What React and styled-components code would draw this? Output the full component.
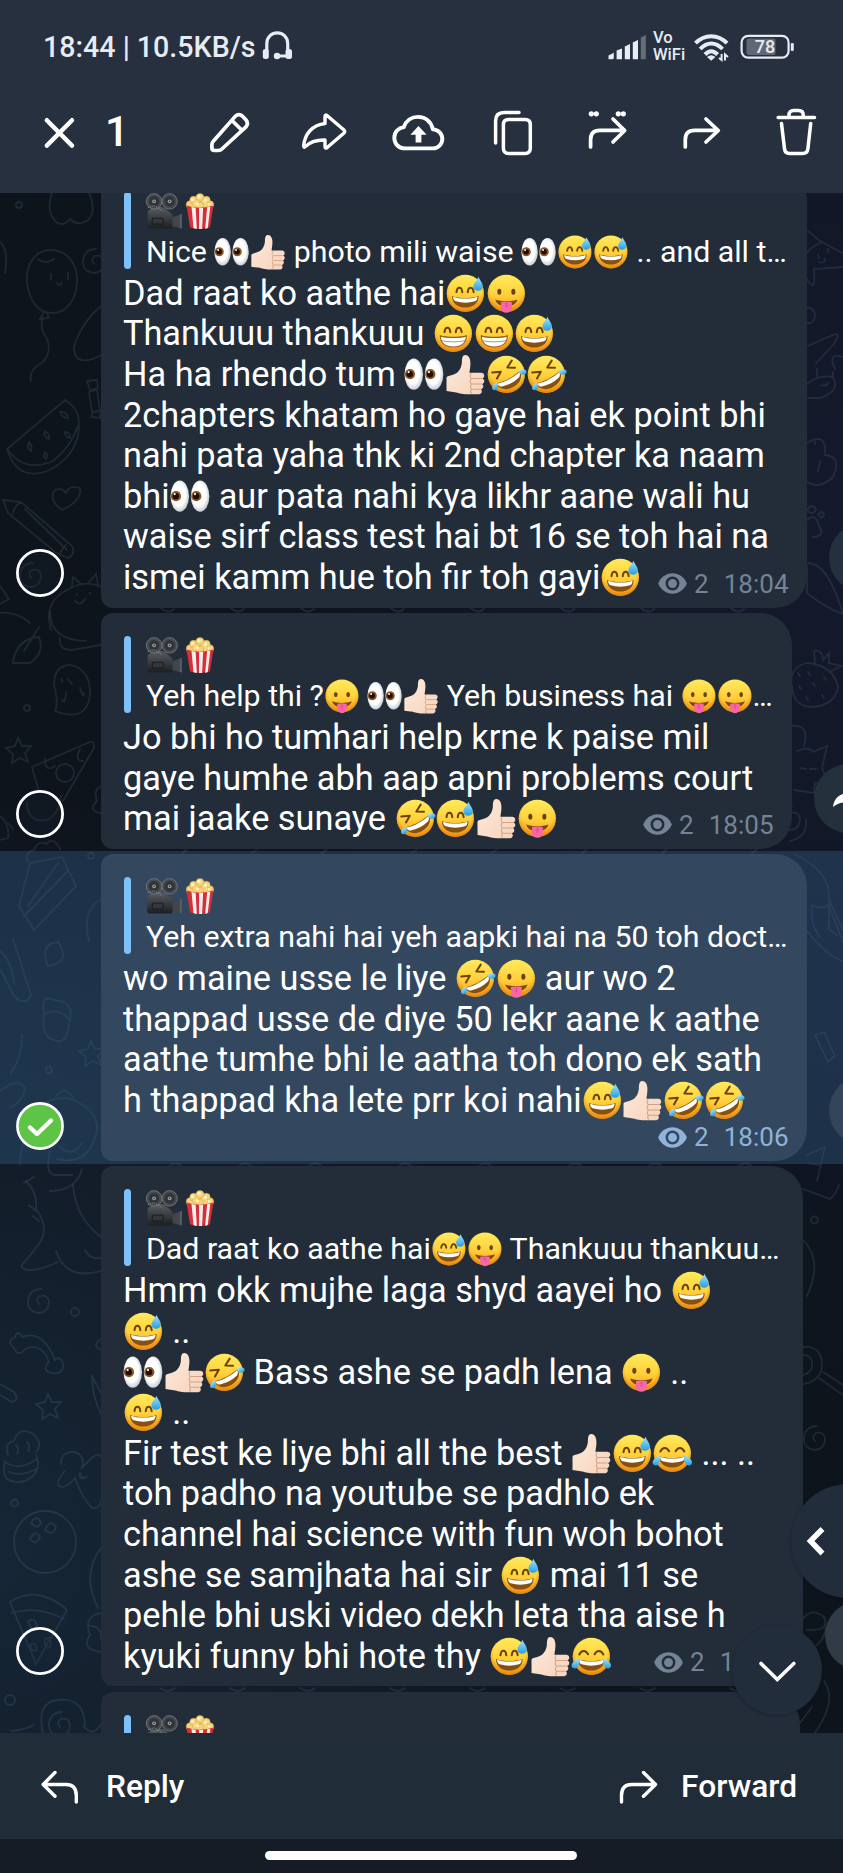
import React from "react";
import styled, { createGlobalStyle, css } from "styled-components";

const GlobalStyle = createGlobalStyle`
  * { box-sizing: border-box; }
  body { margin: 0; background: #0e151d; }
`;

const Screen = styled.div`
  width: 843px;
  height: 1873px;
  display: flex;
  flex-direction: column;
  overflow: hidden;
  font-family: Roboto, "Liberation Sans", sans-serif;
  color: #fff;
`;

const Header = styled.header`
  flex: none;
  height: 192.5px;
  background: #26303e;
`;

const StatusBar = styled.div`
  height: 102px;
  display: flex;
  align-items: flex-start;
  justify-content: space-between;
  padding: 30px 49px 0 43px;
  color: #e6ebf4;
`;

const StatusLeft = styled.div`
  display: flex;
  align-items: flex-start;
  gap: 6px;
  font-size: 28.6px;
  line-height: 34px;
  font-weight: 500;
  white-space: pre;
`;

const StatusRight = styled.div`
  display: flex;
  align-items: flex-start;
`;

const NetworkLabel = styled.div`
  width: 33px;
  margin: 0 7px;
  font-size: 16.6px;
  font-weight: 500;
  line-height: 16.8px;
`;

const Toolbar = styled.div`
  height: 60px;
  display: flex;
  align-items: center;
`;

const CloseButton = styled.div`
  width: 105px;
  height: 60px;
  padding-left: 30px;
`;

const Count = styled.div`
  flex: 1;
  font-size: 42px;
  font-weight: 500;
  line-height: 60px;
`;

const ToolButton = styled.div`
  flex: none;
  width: 94.4px;
  display: flex;
  justify-content: center;
`;

const Chat = styled.main`
  position: relative;
  flex: none;
  height: 1540px;
  overflow: hidden;
  background:
    radial-gradient(ellipse 560px 900px at 100% 22%, #141a2c 0%, rgba(20, 26, 44, 0) 100%),
    radial-gradient(ellipse 620px 760px at 0% 88%, #162636 0%, rgba(22, 38, 54, 0) 100%),
    #0e141c;
`;

const Wallpaper = styled.svg`
  position: absolute;
  left: 0;
  top: 0;
  display: block;
`;

const Messages = styled.div`
  position: relative;
  margin-top: -26.2px;
`;

const Row = styled.div`
  display: flex;
  align-items: flex-end;
  height: ${(p) => p.$height}px;
  padding: 2.6px 0;
  overflow: hidden;
  ${(p) => p.$selected && css`background: rgba(51, 92, 136, 0.4);`}
`;

const Selector = styled.div`
  flex: none;
  width: 101px;
  padding: 0 0 11px 16.3px;
  svg { display: block; }
`;

const Bubble = styled.article`
  flex: none;
  width: ${(p) => p.$width}px;
  height: 100%;
  display: flex;
  flex-direction: column;
  padding: 23px 18.5px 0 23px;
  border-radius: 12px 32px 32px 12px;
  background: ${(p) => (p.$selected ? "#33485f" : "#222d39")};
`;

const Quote = styled.div`
  flex: none;
  display: flex;
  height: 76.8px;
  margin-bottom: 4.2px;
  font-size: 30.3px;
  line-height: 35.5px;
  white-space: pre;
`;

const QuoteBar = styled.div`
  width: 7.3px;
  margin-right: 14.7px;
  border-radius: 3.5px;
  background: #7dc1fb;
`;

const QuoteName = styled.div`
  height: 35.5px;
  padding-top: 0.8px;
  margin-bottom: 6.2px;
`;

const QuoteText = styled.div`
  height: 35.5px;
`;

const Line = styled.div`
  height: 40.6px;
  margin-left: -1px;
  font-size: 34.3px;
  line-height: 40.6px;
  white-space: pre;
`;

const Meta = styled.div`
  display: flex;
  align-items: center;
  align-self: flex-end;
  flex: none;
  width: 130.5px;
  height: 30px;
  margin-top: auto;
  margin-bottom: 9.3px;
  font-size: 26px;
  line-height: 30px;
  color: ${(p) => (p.$selected ? "#8fb3da" : "#748496")};
  svg { margin-right: 7px; }
`;

const Time = styled.span`
  margin-left: auto;
`;

const Share = styled.div`
  flex: none;
  width: 69px;
  height: 69px;
  margin: 0 0 16px 22px;
  border-radius: 50%;
  background: ${(p) => p.$color};
  svg { display: block; }
`;

const FloatingButton = styled.div`
  position: absolute;
  left: ${(p) => p.$left}px;
  top: ${(p) => p.$top}px;
  width: ${(p) => p.$size}px;
  height: ${(p) => p.$size}px;
  border-radius: 50%;
  background: #222d3b;
  box-shadow: 0 1px 3px rgba(8, 14, 22, 0.3);
  svg { display: block; }
`;

const ActionBar = styled.footer`
  flex: none;
  height: 106.3px;
  display: flex;
  justify-content: space-between;
  align-items: flex-start;
  padding: 32px 46px 0 40px;
  background: #212c39;
  font-size: 31.7px;
  font-weight: 500;
  line-height: 44px;
`;

const Action = styled.div`
  display: flex;
  gap: ${(p) => p.$gap}px;
  svg { margin-top: 4px; }
`;

const NavBar = styled.div`
  flex: 1;
  display: flex;
  justify-content: center;
  align-items: flex-start;
  padding-top: 12.6px;
  background: #151c26;
`;

const HomePill = styled.div`
  width: 312px;
  height: 9px;
  margin-right: 1px;
  border-radius: 5px;
  background: #fff;
`;

const EmojiSvg = styled.svg`
  display: inline-block;
  width: 1.186em;
  height: 1.186em;
  vertical-align: -0.251em;
  overflow: visible;
`;

const stroke = {
  fill: "none",
  stroke: "currentColor",
  strokeWidth: 3.7,
  strokeLinecap: "round",
  strokeLinejoin: "round",
};

const Gradients = styled.svg`
  position: absolute;
  width: 0;
  height: 0;
`;

const Defs = () => (
  <Gradients>
    <defs>
      <linearGradient id="face" x1="0" y1="0" x2="0" y2="1">
        <stop offset="0" stopColor="#ffea5c" />
        <stop offset=".55" stopColor="#ffd03a" />
        <stop offset="1" stopColor="#f5961a" />
      </linearGradient>
      <radialGradient id="rim" cx=".5" cy=".42" r=".58">
        <stop offset=".74" stopColor="#e98c10" stopOpacity="0" />
        <stop offset="1" stopColor="#dc7d0c" stopOpacity=".75" />
      </radialGradient>
      <linearGradient id="tear" x1="0" y1="0" x2="0" y2="1">
        <stop offset="0" stopColor="#a5e3fb" />
        <stop offset="1" stopColor="#279fe0" />
      </linearGradient>
      <radialGradient id="eyeball" cx=".45" cy=".45" r=".55">
        <stop offset=".65" stopColor="#fff" />
        <stop offset="1" stopColor="#c9cdd4" />
      </radialGradient>
      <linearGradient id="hand" x1="0" y1="0" x2="1" y2="1">
        <stop offset="0" stopColor="#ffeadb" />
        <stop offset="1" stopColor="#f5d3bd" />
      </linearGradient>
      <linearGradient id="metal" x1="0" y1="0" x2="0" y2="1">
        <stop offset="0" stopColor="#5a5f65" />
        <stop offset="1" stopColor="#1c1e21" />
      </linearGradient>
    </defs>
  </Gradients>
);

const Face = () => (
  <>
    <circle cx="20" cy="20" r="18.3" fill="url(#face)" />
    <circle cx="20" cy="20" r="18.3" fill="url(#rim)" />
  </>
);
const browned = { fill: "none", stroke: "#6b420c", strokeWidth: 2, strokeLinecap: "round", strokeLinejoin: "round" };
const ArchEyes = () => <path {...browned} d="M11.3 18.8C12 13.2 16.4 13.2 17 18.8M22.4 18.8C23 13.2 27.4 13.2 28.2 18.8" />;
const Grin = () => (
  <>
    <path d="M7 22.5C13 25.2 27 25.2 33 22.5C33.5 29.5 27.5 34 20 34S6.5 29.5 7 22.5Z" fill="#86500f" />
    <path d="M8 23.3C14 25.8 26 25.8 32 23.3C32 25.8 31 27.2 29.5 27.8C23 29.6 17 29.6 10.5 27.8C9 27.2 8 25.8 8 23.3Z" fill="#fff" />
  </>
);

const EMOJI = {
  "😅": (
    <>
      <Face />
      <ArchEyes />
      <Grin />
      <path d="M32.8 3.6C34.6 7.4 37.4 10 37.2 13.4A4.7 4.7 0 0 1 27.9 13.4C27.8 10 31.6 7.4 32.8 3.6Z" fill="url(#tear)" />
    </>
  ),
  "😁": (
    <>
      <Face />
      <ArchEyes />
      <path d="M7.2 22.5C13 24.5 27 24.5 32.8 22.5C33 29.5 27.5 33.4 20 33.4S7 29.5 7.2 22.5Z" fill="#fff" stroke="#94601a" strokeWidth="1.1" />
      <path d="M8.2 27.2C15 28.8 25 28.8 31.8 27.2" stroke="#a98a66" strokeWidth=".9" fill="none" />
    </>
  ),
  "😛": (
    <>
      <Face />
      <ellipse cx="13.1" cy="18.4" rx="2" ry="2.9" fill="#6b420c" />
      <ellipse cx="26.9" cy="18.4" rx="2" ry="2.9" fill="#6b420c" />
      <path d="M9 26C15 28.3 25 28.3 31 26C29.5 30.5 26 32.5 20 32.5S10.5 30.5 9 26Z" fill="#7d460c" />
      <path d="M14.7 28.6Q20 27.4 25.4 28.6V33.8A5.35 5.35 0 0 1 14.7 33.8Z" fill="#f866a6" />
      <path d="M20 29V34" stroke="#dc3f83" strokeWidth="1" />
    </>
  ),
  "🤣": (
    <>
      <Face />
      <g transform="rotate(-28 20 20)">
        <path {...browned} d="M8.6 12L16.4 15.2L10 19.2M31 10.6L24 14.5L30.6 18.2" />
        <path d="M6.5 23C14 25.6 26 25.6 33.5 23C33 30.2 27.5 34.2 20 34.2S7 30.2 6.5 23Z" fill="#86500f" />
        <path d="M7.5 23.8C14 26.2 26 26.2 32.5 23.8C32 26.6 31 28 29.4 28.6C23 30.4 17 30.4 10.6 28.6C9 28 8 26.6 7.5 23.8Z" fill="#fff" />
        <path d="M7.8 22.5C9 26 6 29.5 2.6 28.4C-.5 27 1 23 7.8 22.5ZM32.2 22.5C31 26 34 29.5 37.4 28.4C40.5 27 39 23 32.2 22.5Z" fill="url(#tear)" />
      </g>
    </>
  ),
  "😂": (
    <>
      <Face />
      <path {...browned} d="M8.2 18.2C10.5 13.6 14.6 13.6 16.8 18M23.2 18C25.4 13.6 29.5 13.6 31.8 18.2" />
      <Grin />
      <path d="M8 22C9.5 26 7.5 32 3.6 32C-.9 31.7-1 25.5 8 22ZM32 22C30.5 26 32.5 32 36.4 32C40.9 31.7 41 25.5 32 22Z" fill="url(#tear)" />
    </>
  ),
  "👀": (
    <>
      {[9.6, 29.6].map((x) => (
        <g key={x}>
          <ellipse cx={x} cy="19.8" rx="9.1" ry="15.3" fill="url(#eyeball)" />
          <circle cx={x - 3.7} cy="19.8" r="5" fill="#8a561f" />
          <circle cx={x - 3.9} cy="19.8" r="3.1" fill="#1f0d03" />
          <circle cx={x - 5} cy="17.8" r="1.1" fill="#fff" />
        </g>
      ))}
    </>
  ),
  "👍🏻": (
    <>
      <path
        d="M1.5 23.5C1.5 21.5 6 21.5 10 19.5C14.5 17 16.2 12.5 16.6 8.5C16.6 4 17.2 1 20 1C23.5 1 25 5 25 9C25 12.5 24.3 16 24 18.5H35.6C39.2 18.5 39.6 23.2 36.7 24C39.4 24.7 39.3 29 36.3 29.5C38.4 30.4 38.2 34.2 35.2 34.6C37 35.7 36.4 39.5 33.5 39.5H20C14.5 39.5 12.5 37.6 8 37.4L1.5 36.4Z"
        fill="url(#hand)"
      />
      <path d="M26 24.1H36.5M26 29.5H36M26 34.6H35M25.8 19C24.2 21 24.4 23 26 24.2C24.4 26 24.4 28 26 29.5C24.6 31.4 24.8 33.2 26 34.6C25 36 25 37.6 26.2 39" stroke="#d6a184" strokeWidth="1" fill="none" />
    </>
  ),
  "🎥": (
    <>
      <path d="M28 27.5L40 23V39.6L28 36.5Z" fill="#41464c" />
      <path d="M37.6 24L40 23V39.6L37.6 39Z" fill="#565c63" />
      <path d="M2 20Q12 12 21 17L29.5 24V37Q29.5 39.5 27 39.5H4Q1.3 39.5 1.3 37Z" fill="url(#metal)" />
      <rect x="7" y="28" width="12" height="6.5" rx=".6" fill="#33373b" stroke="#111" strokeWidth=".8" />
      {[9, 26.3].map((x) => (
        <g key={x}>
          <circle cx={x} cy="9.3" r="8.6" fill="#45494d" stroke="#7a7f84" strokeWidth=".9" />
          <circle cx={x} cy="9.3" r="5.6" fill="#303337" />
          <circle cx={x} cy="9.3" r="2.1" fill="#a0a5aa" />
          <circle cx={x} cy="9.3" r=".9" fill="#222" />
        </g>
      ))}
      <path d="M2 16.5L9 14L18 20" stroke="#83888c" strokeWidth="1" strokeDasharray="1.5 1" fill="none" />
    </>
  ),
  "🍿": (
    <>
      <g fill="#f5d47c" stroke="#d9a649" strokeWidth=".6">
        <circle cx="9" cy="13" r="4.3" /><circle cx="31" cy="13" r="4.3" />
        <circle cx="13" cy="8" r="4.4" /><circle cx="27" cy="8" r="4.4" />
        <circle cx="20" cy="5" r="4.4" /><circle cx="16" cy="12" r="4.6" />
        <circle cx="24.5" cy="12" r="4.6" /><circle cx="20" cy="14" r="4" />
      </g>
      <g fill="#fff1bd"><circle cx="19" cy="4" r="2" /><circle cx="12" cy="7.5" r="1.8" /><circle cx="26" cy="8" r="2" /><circle cx="17" cy="12" r="1.8" /><circle cx="30" cy="12.5" r="1.5" /></g>
      <path d="M5 14Q20 19 35 14L31 38.5Q20 41.5 9 38.5Z" fill="#d52f3c" />
      <path d="M10.6 15.5L15.2 16.3L16.5 40L12.8 39.3ZM19 16.6H23.5L22.4 40.2H19ZM28 16L31.5 15.2L28.6 39.2L25.8 39.8Z" fill="#fbeeea" />
    </>
  ),
};

const EMOJI_RE = /(👍🏻|😅|😁|😛|🤣|😂|👀|🎥|🍿)/u;

const Rich = ({ text }) =>
  text.split(EMOJI_RE).map((part, i) =>
    EMOJI[part] ? (
      <EmojiSvg key={i} viewBox="0 0 40 40" role="img" aria-label={part}>
        {EMOJI[part]}
      </EmojiSvg>
    ) : (
      part
    )
  );

const Ring = () => (
  <svg width="48" height="48">
    <circle cx="24" cy="24" r="22.6" fill="rgba(24,40,58,.2)" stroke="#fff" strokeWidth="2.8" />
  </svg>
);
const Checked = () => (
  <svg width="48" height="48">
    <circle cx="24" cy="24" r="22.6" fill="#5dc445" stroke="#fff" strokeWidth="2.6" />
    <path d="M14 25.5L21 32L35 18.5" fill="none" stroke="#fff" strokeWidth="4.4" strokeLinecap="round" strokeLinejoin="round" />
  </svg>
);
const Eye = ({ hole }) => (
  <svg width="29" height="21" viewBox="0 0 29 21">
    <path d="M14.5 .3C8 .3 2.5 4.5 .2 10.5C2.5 16.5 8 20.7 14.5 20.7S26.5 16.5 28.8 10.5C26.5 4.5 21 .3 14.5 .3Z" fill="currentColor" />
    <circle cx="14.5" cy="10.5" r="5.7" fill="none" stroke={hole} strokeWidth="2.5" />
  </svg>
);

const MESSAGES = [
  {
    height: 444.4, width: 706, time: "18:04", share: "#25303f",
    quote: "Nice 👀👍🏻 photo mili waise 👀😅😅 .. and all t…",
    lines: [
      "Dad raat ko aathe hai😅😛",
      "Thankuuu thankuuu 😁😁😅",
      "Ha ha rhendo tum 👀👍🏻🤣🤣",
      "2chapters khatam ho gaye hai ek point bhi",
      "nahi pata yaha thk ki 2nd chapter ka naam",
      "bhi👀 aur pata nahi kya likhr aane wali hu",
      "waise sirf class test hai bt 16 se toh hai na",
      "ismei kamm hue toh fir toh gayi😅",
    ],
  },
  {
    height: 240.7, width: 691, time: "18:05", share: "#25303d",
    quote: "Yeh help thi ?😛 👀👍🏻 Yeh business hai 😛😛…",
    lines: ["Jo bhi ho tumhari help krne k paise mil", "gaye humhe abh aap apni problems court", "mai jaake sunaye 🤣😅👍🏻😛"],
  },
  {
    height: 312.5, width: 706, time: "18:06", share: "#34445b", selected: true,
    quote: "Yeh extra nahi hai yeh aapki hai na 50 toh doct…",
    lines: ["wo maine usse le liye 🤣😛 aur wo 2", "thappad usse de diye 50 lekr aane k aathe", "aathe tumhe bhi le aatha toh dono ek sath", "h thappad kha lete prr koi nahi😅👍🏻🤣🤣"],
  },
  {
    height: 525.2, width: 702, time: "18:07", share: "#303b46",
    quote: "Dad raat ko aathe hai😅😛 Thankuuu thankuu…",
    lines: [
      "Hmm okk mujhe laga shyd aayei ho 😅",
      "😅 ..",
      "👀👍🏻🤣 Bass ashe se padh lena 😛 ..",
      "😅 ..",
      "Fir test ke liye bhi all the best 👍🏻😅😂 ... ..",
      "toh padho na youtube se padhlo ek",
      "channel hai science with fun woh bohot",
      "ashe se samjhata hai sir 😅 mai 11 se",
      "pehle bhi uski video dekh leta tha aise h",
      "kyuki funny bhi hote thy 😅👍🏻😂",
    ],
  },
];

const LineStack = styled.div`
  flex: none;
`;

const MetaSlot = styled.div`
  flex: none;
  display: flex;
  flex-direction: column;
  height: 70px;
  margin-top: ${(p) => (p.$ownLine ? -28.9 : -59.8)}px;
`;

const Message = ({ m }) => (
  <Row $height={m.height} $selected={m.selected}>
    <Selector>{m.selected ? <Checked /> : <Ring />}</Selector>
    <Bubble $width={m.width} $selected={m.selected}>
      <Quote>
        <QuoteBar />
        <div>
          <QuoteName><Rich text="🎥🍿" /></QuoteName>
          <QuoteText><Rich text={m.quote} /></QuoteText>
        </div>
      </Quote>
      <LineStack>
        {m.lines.map((l, i) => <Line key={i}><Rich text={l} /></Line>)}
      </LineStack>
      <MetaSlot $ownLine={m.selected}>
        <Meta $selected={m.selected}>
          <Eye hole={m.selected ? "#33485f" : "#222d39"} />
          <span>2</span>
          <Time>{m.time}</Time>
        </Meta>
      </MetaSlot>
    </Bubble>
    <Share $color={m.share}>
      <svg width="69" height="69">
        <path d="M19 43C20 33 27 29 36 29V21L51 34L36 47V38C29 38 24 39 19 43Z" fill="#fff" />
      </svg>
    </Share>
  </Row>
);

const SWIRL = "q-4-5 1-8q8-2 9 6q0 10-10 11q-12-1-11-13q2-11 13-11";
const STAR = "l4 8 9 0-6 7 3 9-8-4-8 5 1-9-7-6 9-2z";
const DOODLES = [
  "M52 192q-6 18 3 28q7 7 15-2q8 8 18 1q9-9 1-27", "M16 204a3 3 0 1 0 6 0a3 3 0 1 0-6 0",
  "M27 281C26 262 36 249 51 249S78 262 77 281S66 312 52 312S29 300 27 281M38 258q8 6 16 0M51 273v6M68 272v6M57 282q3 4 5 0M44 311l-4 7 9-1-2-5M43 317q-4 9 3 19q7 13-3 25q-15 8-12 19",
  "M0 241q9 8 5 31M94 263" + SWIRL,
  "M101 305q-20 17-27 41q0 16 15 13q8-2 12-5",
  "M87 380l10-1 1 8-8 2zM89 391l8-2 3 20-8 2zM93 411l7-1 0 7-9-1z",
  "M65 399L7 448Q17 482 50 469Q84 450 78 414Q74 404 65 399M8 449Q24 472 53 460Q70 447 78 425M60 411q7-1 8 6q-6 0-8-6M45 430q5 3 4 8q-6-2-4-8M65 431q6 1 5 6q-6-1-5-6M29 441q4 4 2 9q-5-3-2-9M45 451q4 3 1 7q-4-3-1-7",
  "M62 509Q49 500 54 490Q61 485 66 492Q69 484 80 487Q82 500 62 509",
  "M3 499l18 2L72 545q4 8-4 12L55 551L8 512zM21 501q-7 4-8 12M25 508l42 41M66 544q-6 6-6 10",
  "M31 577" + SWIRL, "M101 586q-16-8-34 3q-24 12-16 40M72 585l1-9 8 7M89 581l7-8 2 11M75 600q5 6 10-2M77 593v1M90 592v1M0 585l9 13-9 5M0 612q16-2 30 10",
  "M50 611q0 28 36 29M60 637q-2 12 12 12l29-5M13 662q3-24 26-26q6 16-9 26zM24 650l15-24M24 707a3 3 0 1 0 6 0a3 3 0 1 0-6 0",
  "M55 710q4-8-1-26q0-20 17-20q20 5 19 30q-3 28-35 16M66 691q-1 14-4 8M80 687q4 12 4 5M68 678l4 5M62 678v3",
  "M18 737" + STAR, "M32 766L90 741q5-1 4 6L63 800M32 766l7 25M45 758q0 14 10 7M56 772a9 9 0 1 0 18 0a9 9 0 1 0-18 0M80 748q-6 12 3 12M27 802q0 20 20 17q12-6 14-24M101 785q-8 4-4 15q-10 10 4 12",
  "M0 815q10 8 8 22l-8 2M8 822l5 6",
  "M28 861q-4-10 6-12q4-10 12-6q8-8 14 5M30 862L19 905L34 929L76 885L62 856zM28 905L58 862M24 915L68 870M88 855a3 3 0 1 0 6 0a3 3 0 1 0-6 0M101 898q-20 12-12 42",
  "M48 965q-9-22 10-24q14 20-10 24M0 950q12 10 14 32M13 938l18 56q-6 12-17 1L0 968M44 1014q-4-22 10-15q22 1 15 24q-2 22-15 16q-13-3-10-25M44 1014q12-9 25 4M22 1034q1 20-11 38",
  "M91 1040" + STAR, "M46 1069a3 3 0 1 0 6 0a3 3 0 1 0-6 0",
  "M0 1090q18-14 25-3q0 10-14 20M56 1094l9-5 8 7M30 1120q14-27 41-22q36 14 22 44q-10 22-36 16M60 1146q12 11 22-4M20 1164q0-24 14-44M24 1182l10-6M50 1150q-6 24 6 24l16 0M50 1190q26 0 32-22",
  "M26 1180q12 12 10 28q14 18 3 35q-9 12-18 22q6 10 37-4M73 1184q2 32 28 52M56 1250q10 30 45 20M85 1249q5 10 16 8M39 1220l-6-5M36 1210l-7-6",
  "M39 1303" + SWIRL, "M71 1311a4 4 0 1 0 8 0a4 4 0 1 0-8 0",
  "M15 1336q-9 4-1 11q4 10 11 1q17-7 24 13q-8 8 2 11q14 2 12-10q-4-8-8-3q-12-31-33-23q-4-8-7 0M101 1338q-10 6 0 11M0 1383l14 8q6 8-2 10L0 1394M48 1393" + STAR + "M92 1375l9 17M92 1375q0 20 9 38",
  "M5 1460q-6 25 20 20q18-8 11-26M8 1454q-4-12 6-14q4-14 18-8q12 10 4 19M6 1462q14 8 31-4M9 1471q13 5 27-3M16 1444q4 4 1 9M27 1441q4 4 1 9",
  "M61 1463a11 11 0 1 1 20 5q17-20 20-12M65 1470q-8 9-7 14q6 6 17-7q7 20 17 30q9 0 9-7M80 1472a3 3 0 1 0 6 4q-6 2-6-4M11 1502a3 3 0 1 0 7 0a3 3 0 1 0-7 0",
  "M14 1541a31 31 0 1 0 62 0a31 31 0 1 0-62 0M31 1522q6-10 10 0q-3 7-10 0M45 1529q5-12 11-3q-3 10-11 3M30 1538q5-10 10-2q-4 9-10 2M101 1547q-20 26-3 60",
  "M10 1601q28-18 57 8L36 1663L10 1601M12 1612q25-8 52 6M28 1620q8-4 9 6q-6 5-9-6M45 1638q8-4 5 8q-6 3-5-8M30 1644q6-4 7 4q-5 5-7-4M101 1612q-18 3-11 22q-10 14 11 17M90 1625q12 0 11 13",
  "M5 1699a5 5 0 1 0 10 0a5 5 0 1 0-10 0M43 1733q-7-31 14-34q28-3 28 26M60 1726" + SWIRL + "M12 1730q15-2 22-6M83 1725q10 12 18-2",
  "M808 230l12 10 22 12M820 242q-14 6-16 17l2 17q10 20 8-8l29-2M818 254l1 3M828 248v3M819 261q6 2 6-3M806 306q12 2 8 13q-4 6-9 1",
  "M808 345l27-12q6 0-2 11l-17 18M807 383q12-10 26-7q8 14-13 21h-12M817 376v-8M833 376l0-5M821 384q5 2 7-2M835 368q-8-17 8-12",
  "M807 442q20-12 18 12q17 1 8 22q-14 13-26 5M820 460l-2 10M815 440v3M807 509q6-8 9 0q-4 6-9 0M818 514q4-6 6 0q-2 5-6 0M807 519q9-8 12 6q7 10-6 11M808 562q20 0 35 51M807 565v27q20 16 36 21",
  "M792 685q-4-18 15-23q26 2 31 24q-3 18-25 20q-20 0-21-21M815 662l-1-12q8-2 9 9l6-7 0 10 12 3-11 6M798 672l2 3M808 671l2 3M799 685l2 3M813 682l2 3M824 676l2 3M806 696l2 3M822 694l2 3",
  "M792 725q18-2 12 20M797 750q12-5 16 1l14-6-5 22 6 14-13 1-1 10-20-3M800 767l6 1M810 768h6M790 820" + SWIRL + "M806 818q2 18-16 22",
  "M794 853q37 17 35 46l14 30M812 904q10 6 17-1l0 25 8 6M812 904q-2 20 8 32M829 905l14 36M807 930q18 23 35 30M815 1034l9-3 11 24-7 6zM807 1154l18-8-8 34M808 1162l12 2M803 1188l27 10q6-5 9-14",
  "M811 1219a3.5 3.5 0 1 0 7 0a3.5 3.5 0 1 0-7 0M804 1240q19 20 3 55M803 1346q18-2 19 17q0 16-18 20M803 1354q10 0 9 11q-1 7-9 9M819 1377l24 17M823 1371l20 13M815 1440" + SWIRL,
  "M803 1618q8-12 21-2q7 14-17 13M824 1616q6 18-9 30M824 1680q14 20-10 53M800 1722l12-16",
];

const ICONS = {
  edit: <path d="M12.9 46V42.5Q12.9 40.6 14.3 39.2L36.2 14.4Q39.9 11 43.5 14.2L47.1 18Q49.9 21.6 46.7 25.2L22.9 47Q21.5 48.5 19.5 48.5H15.5Q12.9 48.5 12.9 46ZM33 18.5L42.9 28.3" />,
  share: <path d="M31 14.5Q31 12.3 33 13.5L50 28Q51.3 29.5 50 31L33.2 45.5Q31 47 31 44.6V38C22 37.8 16 39.8 11.4 44.6Q9.5 46.3 9.7 43.4C11 31.5 18.5 22.8 31 21.6Z" strokeWidth="3.4" />,
  cloud: <><path strokeWidth="3.9" d="M17 46.4C10 46.4 6.3 41.3 6.3 35.8C6.3 30 10.5 25.8 15.8 25.1C18 18.7 23.5 14.9 30 14.9C38 14.9 43.3 20 44.9 27.4C50.5 27.6 54.3 31.8 54.3 36.9C54.3 42.2 50 46.4 45 46.4Z" /><path d="M30.5 24L22.4 32.7H27.6V40.5H33.4V32.7H38.6Z" fill="#fff" stroke="none" /></>,
  copy: <path strokeWidth="3.5" d="M12.6 41V19Q12.6 10.6 21 10.6H36M25.5 17.6H42.2Q47.3 17.6 47.3 22.7V46.3Q47.3 51.4 42.2 51.4H25.5Q20.4 51.4 20.4 46.3V22.7Q20.4 17.6 25.5 17.6Z" />,
  forwardQuote: <><path d="M13.6 45V37.5Q13.6 28.3 22.8 28.3H46.5M36 17L47.7 28.5L36 40" /><g fill="#fff" stroke="none"><circle cx="14.3" cy="11.8" r="2.6" /><circle cx="19.3" cy="11.8" r="2.6" /><circle cx="41.3" cy="11.8" r="2.6" /><circle cx="46.3" cy="11.8" r="2.6" /></g></>,
  forward: <path d="M14.3 45V37.5Q14.3 28.3 23.5 28.3H46.8M35 17L47.3 28.5L35 40" />,
  trash: <path strokeWidth="3.5" d="M12.1 15.4H48.5M23 15V13.2Q23 8.6 27.6 8.6H32.6Q37.2 8.6 37.2 13.2V15M15.5 21.5L18.5 46.8Q19 51.5 23.6 51.5H36.7Q41.3 51.5 41.9 46.8L44.7 21.5" />,
};

export default function App() {
  return (
    <Screen>
      <GlobalStyle />
      <Defs />
      <Header>
        <StatusBar>
          <StatusLeft>
            18:44 | 10.5KB/s
            <svg width="31" height="30" viewBox="0 0 31 30" {...stroke} strokeWidth="3.2">
              <path d="M4.8 21V13.8C4.8 -.8 25.7 -.8 25.7 13.8V21M15 26H26" />
              <g fill="currentColor" stroke="none">
                <rect x=".8" y="19" width="6" height="10" rx="2.5" /><rect x="23.5" y="19" width="6.5" height="10" rx="2.5" /><circle cx="15" cy="26" r="3.2" />
              </g>
            </svg>
          </StatusLeft>
          <StatusRight>
            <svg width="38" height="30" viewBox="0 0 38 30" fill="currentColor">
              <path d="M.5 29.3V25.5L5.8 22.8V27.7Q5.8 29.3 4.2 29.3Z" />
              <path d="M8.6 20.5L14 18.5V29.3H8.6Z" /><path d="M16.8 16.5L22 14V29.3H16.8Z" /><path d="M24.8 12.5L30 10V29.3H24.8Z" />
              <path d="M32.8 7.5L37.8 5V29.3H32.8Z" opacity=".33" />
            </svg>
            <NetworkLabel>Vo<br />WiFi</NetworkLabel>
            <svg width="45" height="32" viewBox="0 0 45 32" fill="none" stroke="currentColor">
              <path d="M2.5 13.2C11.5 3.8 25 3.8 34 13.2M7.2 19C14.2 11.5 22.5 11.5 29.5 19M12 24.5Q18.2 18 24.6 24.5" strokeWidth="4" />
              <path d="M14 27Q18.2 23.6 22.4 27L18.2 30.8Z" fill="currentColor" stroke="none" />
              <path d="M28.6 24V30L26 28M32 30.5V24.5L35 27" strokeWidth="2" />
            </svg>
            <svg width="56" height="34" viewBox="0 0 56 34">
              <rect x="8.5" y="8.5" width="29" height="16.5" rx="2" fill="#606875" />
              <rect x="3.6" y="5.9" width="47" height="21.7" rx="6.5" fill="none" stroke="currentColor" strokeWidth="2.2" />
              <rect x="52.8" y="13" width="3" height="8" rx="1.2" fill="currentColor" />
              <text x="27" y="23.2" fontSize="18" fontWeight="500" fill="currentColor" textAnchor="middle">78</text>
            </svg>
          </StatusRight>
        </StatusBar>
        <Toolbar>
          <CloseButton>
            <svg width="60" height="60" {...stroke} strokeWidth="4.4"><path d="M16.8 18.2L42 43.6M42 18.2L16.8 43.6" /></svg>
          </CloseButton>
          <Count>1</Count>
          {Object.entries(ICONS).map(([name, icon]) => (
            <ToolButton key={name}><svg width="60" height="60" {...stroke}>{icon}</svg></ToolButton>
          ))}
        </Toolbar>
      </Header>
      <Chat>
        <Wallpaper width="843" height="1541" viewBox="0 192 843 1541" fill="none" stroke="rgba(130,155,185,.15)" strokeWidth="1.8" strokeLinecap="round">
          {DOODLES.map((d, i) => <path key={i} d={d} />)}
          {[160, 230, 300, 390, 470, 560, 640, 730].map((x) => (
            <path key={x} d={`M${x} 606q8 8 14 2M${x + 20} 854l7-6M${x + 9} 1165q8-6 14 2M${x} 1687q8 6 15 0`} />
          ))}
        </Wallpaper>
        <Messages>
          {MESSAGES.map((m) => <Message key={m.time} m={m} />)}
          <Row $height={200}>
            <Selector />
            <Bubble $width={699}>
              <Quote><QuoteBar /><QuoteName><Rich text="🎥🍿" /></QuoteName></Quote>
            </Bubble>
          </Row>
        </Messages>
        <FloatingButton $left={791} $top={1291} $size={114}>
          <svg width="114" height="114"><path d="M31.5 45L19.5 57L31.5 69.5" fill="none" stroke="#fff" strokeWidth="5.5" /></svg>
        </FloatingButton>
        <FloatingButton $left={732} $top={1432} $size={90}>
          <svg width="90" height="90"><path d="M29 38.5L45.3 54.5L61.8 38.5" fill="none" stroke="#fff" strokeWidth="3.6" strokeLinecap="round" /></svg>
        </FloatingButton>
      </Chat>
      <ActionBar>
        <Action $gap={26}>
          <svg width="40" height="40" {...stroke} strokeWidth="3.4"><path d="M36.3 33V26.5Q36.3 15.5 26 15.5H4M15 3.5L3.2 15.5L15 27.3" /></svg>
          Reply
        </Action>
        <Action $gap={22}>
          <svg width="40" height="40" {...stroke} strokeWidth="3.4"><path d="M2.5 33V26.5Q2.5 15.5 12.8 15.5H36M24.5 3.5L36.5 15.5L24.5 27.3" /></svg>
          Forward
        </Action>
      </ActionBar>
      <NavBar><HomePill /></NavBar>
    </Screen>
  );
}
